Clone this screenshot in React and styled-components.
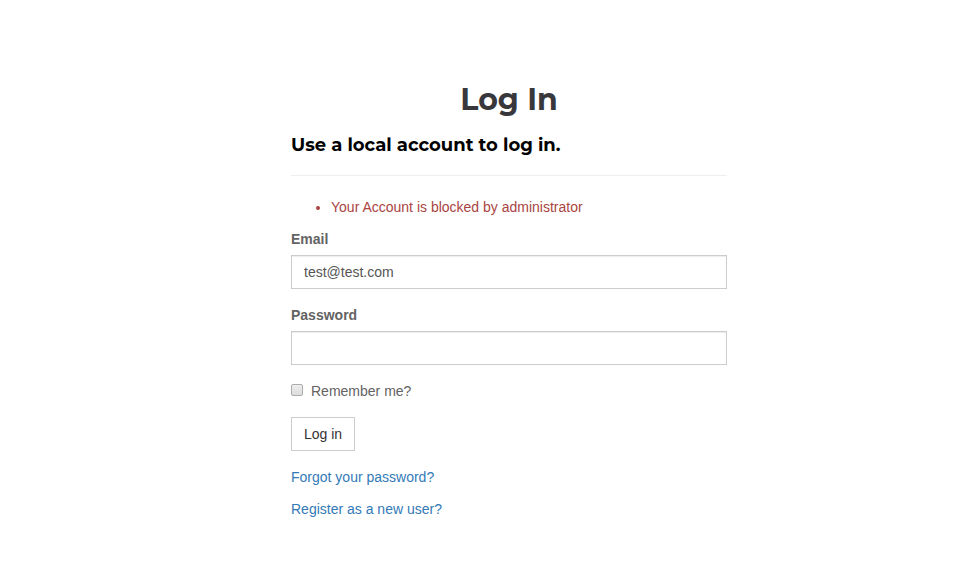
import React from "react";
import styled, { createGlobalStyle } from "styled-components";

const GlobalStyle = createGlobalStyle`
  *, *::before, *::after { box-sizing: border-box; }
  body {
    margin: 0;
    background: #fff;
    color: #636363;
    font: 14px/20px "Liberation Sans", Arial, sans-serif;
  }
`;

const Page = styled.main`
  display: flex;
  flex-direction: column;
  align-items: center;
  padding: 80px 16px 40px 70px;
`;

const LoginForm = styled.form`
  width: 100%;
  max-width: 436px;
  display: flex;
  flex-direction: column;
`;

const Title = styled.h1`
  margin: 0 0 14px;
  color: #38383c;
  font: 700 30px/40px Montserrat, Inter, sans-serif;
  text-align: center;
`;

const Subtitle = styled.h2`
  margin: 0;
  color: #000;
  font: 700 18px/22px Montserrat, Inter, sans-serif;
`;

const Divider = styled.hr`
  width: 100%;
  margin: 19px 0 21px;
  border: 0;
  border-top: 1px solid #eee;
`;

const Errors = styled.ul`
  margin: 0 0 12px;
  padding-left: 40px;
  color: #a94442;
`;

const Field = styled.div`
  display: flex;
  flex-direction: column;
  margin-bottom: 16px;
`;

const Label = styled.label`
  margin-bottom: 6px;
  font-weight: 700;
`;

const Input = styled.input`
  width: 100%;
  height: 34px;
  padding: 6px 12px;
  border: 1px solid #ccc;
  border-radius: 0;
  background: #fff;
  box-shadow: inset 0 1px 1px rgba(0, 0, 0, 0.075);
  color: #555;
  font: inherit;
`;

const Remember = styled.label`
  display: flex;
  align-items: flex-start;
  gap: 8px;
  margin-bottom: 16px;
`;

const Checkbox = styled.input`
  appearance: none;
  width: 12px;
  height: 12px;
  margin: 3px 0 0;
  border: 1px solid #acacac;
  border-radius: 2px;
  background: linear-gradient(#eee, #dcdcdc);
  &:checked { background: #337ab7; }
`;

const Button = styled.button`
  align-self: flex-start;
  height: 34px;
  margin-bottom: 16px;
  padding: 6px 12px;
  border: 1px solid #ccc;
  background: #fff;
  color: #333;
  font: inherit;
  cursor: pointer;
`;

const Links = styled.nav`
  display: flex;
  flex-direction: column;
  align-items: flex-start;
  gap: 12px;
`;

const TextLink = styled.a`
  color: #337ab7;
  text-decoration: none;
  &:hover { text-decoration: underline; }
`;

export default function App() {
  return (
    <>
      <GlobalStyle />
      <Page>
        <LoginForm onSubmit={(event) => event.preventDefault()}>
          <Title>Log In</Title>
          <Subtitle>Use a local account to log in.</Subtitle>
          <Divider />
          <Errors role="alert">
            <li>Your Account is blocked by administrator</li>
          </Errors>
          <Field>
            <Label htmlFor="email">Email</Label>
            <Input id="email" type="email" defaultValue="test@test.com" />
          </Field>
          <Field>
            <Label htmlFor="password">Password</Label>
            <Input id="password" type="password" />
          </Field>
          <Remember>
            <Checkbox type="checkbox" />
            Remember me?
          </Remember>
          <Button type="submit">Log in</Button>
          <Links>
            <TextLink href="#forgot">Forgot your password?</TextLink>
            <TextLink href="#register">Register as a new user?</TextLink>
          </Links>
        </LoginForm>
      </Page>
    </>
  );
}
